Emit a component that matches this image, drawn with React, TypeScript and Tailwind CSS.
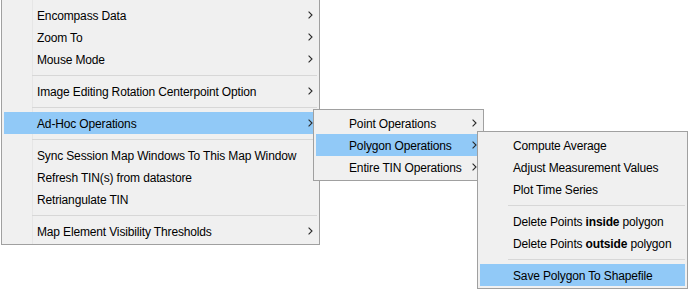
import type { ReactNode } from 'react';

type Entry =
  | { kind: 'item'; label: ReactNode; sub?: boolean; active?: boolean }
  | { kind: 'sep' };

const Chevron = () => (
  <svg width="5" height="8" viewBox="0 0 5 8" className="shrink-0">
    <path d="M0.6 0.6 L4 4 L0.6 7.4" fill="none" stroke="#2a2a2a" strokeWidth="1.1" />
  </svg>
);

const MenuItem = ({ label, sub, active }: { label: ReactNode; sub?: boolean; active?: boolean }) => (
  <div
    className={`flex items-center h-[22px] pl-[33px] pr-[4px] whitespace-nowrap ${
      active ? 'bg-[#91c9f7]' : ''
    }`}
  >
    <span className="leading-[22px] pt-px">{label}</span>
    {sub && (
      <span className="ml-auto pl-[6px] flex items-center">
        <Chevron />
      </span>
    )}
  </div>
);

const Separator = () => (
  <div className="h-[10px] pt-[5px] pl-[28px]">
    <div className="h-px bg-[#d7d7d7]" />
  </div>
);

const Menu = ({ entries, className }: { entries: Entry[]; className: string }) => (
  <div className={`bg-[#f0f0f0] border-[#a0a0a0] px-[2px] ${className}`}>
    {entries.map((e, i) =>
      e.kind === 'sep' ? <Separator key={i} /> : <MenuItem key={i} label={e.label} sub={e.sub} active={e.active} />
    )}
  </div>
);

const mainEntries: Entry[] = [
  { kind: 'item', label: 'Encompass Data', sub: true },
  { kind: 'item', label: 'Zoom To', sub: true },
  { kind: 'item', label: 'Mouse Mode', sub: true },
  { kind: 'sep' },
  { kind: 'item', label: 'Image Editing Rotation Centerpoint Option', sub: true },
  { kind: 'sep' },
  { kind: 'item', label: 'Ad-Hoc Operations', sub: true, active: true },
  { kind: 'sep' },
  { kind: 'item', label: 'Sync Session Map Windows To This Map Window' },
  { kind: 'item', label: 'Refresh TIN(s) from datastore' },
  { kind: 'item', label: 'Retriangulate TIN' },
  { kind: 'sep' },
  { kind: 'item', label: 'Map Element Visibility Thresholds', sub: true },
];

const adHocEntries: Entry[] = [
  { kind: 'item', label: 'Point Operations', sub: true },
  { kind: 'item', label: 'Polygon Operations', sub: true, active: true },
  { kind: 'item', label: 'Entire TIN Operations', sub: true },
];

const polygonEntries: Entry[] = [
  { kind: 'item', label: 'Compute Average' },
  { kind: 'item', label: 'Adjust Measurement Values' },
  { kind: 'item', label: 'Plot Time Series' },
  { kind: 'sep' },
  {
    kind: 'item',
    label: (
      <>
        Delete Points <b className="font-bold">inside</b> polygon
      </>
    ),
  },
  {
    kind: 'item',
    label: (
      <>
        Delete Points <b className="font-bold">outside</b> polygon
      </>
    ),
  },
  { kind: 'sep' },
  { kind: 'item', label: 'Save Polygon To Shapefile', active: true },
];

export default function App() {
  return (
    <div
      className="relative w-[691px] h-[291px] overflow-hidden bg-white text-[12px] tracking-[-0.15px] text-black"
      style={{ fontFamily: '"Liberation Sans", Arial, sans-serif' }}
    >
      {/* main context menu, top edge is cut off */}
      <Menu
        entries={mainEntries}
        className="ml-[1px] w-[319px] border-x border-b pt-[4px] pb-[2px] bg-[linear-gradient(to_right,transparent_30px,#e6e6e6_30px,#e6e6e6_31px,transparent_31px)]"
      />

      {/* Ad-Hoc Operations submenu */}
      <Menu entries={adHocEntries} className="absolute left-[313px] top-[109px] w-[171px] border py-[2px]" />

      {/* Polygon Operations submenu */}
      <Menu entries={polygonEntries} className="absolute left-[477px] top-[131px] w-[211px] border py-[2px]" />
    </div>
  );
}
